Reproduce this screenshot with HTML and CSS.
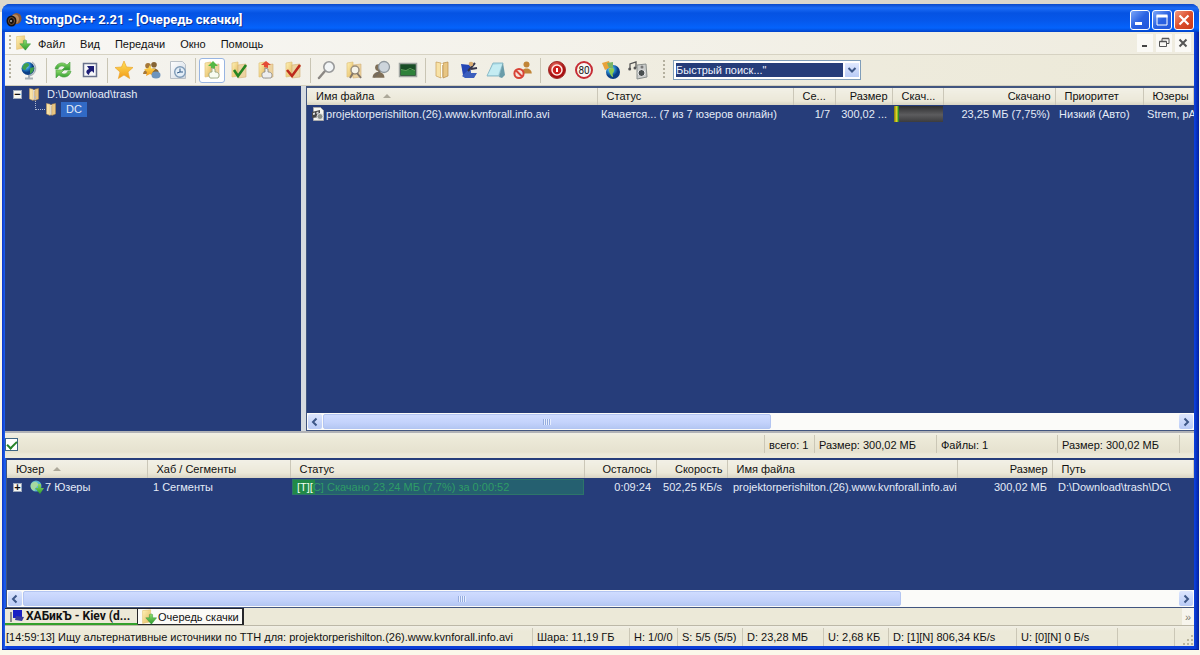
FILE: index.html
```html
<!DOCTYPE html>
<html lang="ru">
<head>
<meta charset="utf-8">
<title>StrongDC++ 2.21 - [Очередь скачки]</title>
<link rel="stylesheet" href="styles.css">
</head>
<body>
<svg class="defs" aria-hidden="true">
  <defs>
    <linearGradient id="gold" x2="1" y2="1"><stop offset="0" stop-color="#fff3b8"/><stop offset="1" stop-color="#e3b75c"/></linearGradient>
    <linearGradient id="amber" x2="0" y2="1"><stop offset="0" stop-color="#ffe45a"/><stop offset="1" stop-color="#f29a18"/></linearGradient>
    <linearGradient id="grass" x2="0" y2="1"><stop offset="0" stop-color="#8fdc6a"/><stop offset="1" stop-color="#2c9a2c"/></linearGradient>
    <linearGradient id="paper" x2="1" y2="1"><stop offset="0" stop-color="#ffffff"/><stop offset="1" stop-color="#cfd8e2"/></linearGradient>
    <radialGradient id="sea" cx=".35" cy=".3"><stop offset="0" stop-color="#9be0ff"/><stop offset=".6" stop-color="#2382c8"/><stop offset="1" stop-color="#0b3f86"/></radialGradient>
    <radialGradient id="ruby" cx=".4" cy=".3"><stop offset="0" stop-color="#f07a6a"/><stop offset="1" stop-color="#a80f10"/></radialGradient>
    <symbol id="folder" viewBox="0 0 20 20"><path d="M3 3l6-1v14l-6 1z" fill="url(#gold)" stroke="#dfc078" stroke-width=".7"/><path d="M9 5l8-1v13l-8 1z" fill="#ecd3a0" stroke="#d3b074" stroke-width=".6"/></symbol>
    <symbol id="open" viewBox="0 0 20 20"><path d="M4 2l5 1v15l-5-2z" fill="#f8e2a6" stroke="#c79d57" stroke-width=".7"/><path d="M16 2l-5 1v15l5-2z" fill="#e8c684" stroke="#b98c47" stroke-width=".7"/><path d="M9 4h2v13H9z" fill="#fffdf2"/><path d="M10.500 5v12" stroke="#b9935a" stroke-width=".7"/></symbol>
    <symbol id="queue" viewBox="0 0 20 20"><path d="M2 2l10-1v15l-10 2z" fill="url(#gold)" stroke="#e2bd66" stroke-width=".7"/><path d="M10.500 7c2-1 3-1 4 0v4h5l-6.500 8-7-8h4.500z" fill="url(#grass)" stroke="#2d9138" stroke-width=".6"/></symbol>
    <symbol id="person" viewBox="0 0 20 20"><circle cx="10" cy="6" r="4"/><path d="M3 18c0-9 14-9 14 0z"/></symbol>
  </defs>
</svg>
<main class="window">
  <header class="titlebar">
    <svg class="icon16" viewBox="0 0 16 16"><ellipse cx="10.500" cy="6.500" rx="5" ry="5.500" fill="#8c5a36"/><ellipse cx="9" cy="7" rx="4" ry="4.500" fill="#b98a5e"/><ellipse cx="5.500" cy="9" rx="5" ry="5.500" fill="#17120f"/><ellipse cx="5.500" cy="9" rx="3" ry="3.500" fill="none" stroke="#7a5233"/><circle cx="5" cy="9" r="1" fill="#aaa"/></svg>
    <h1 class="title">StrongDC++ 2.21 - [Очередь скачки]</h1>
    <div class="captions">
      <button class="caption" aria-label="Свернуть"><svg viewBox="0 0 18 18"><path d="M4 12.500h7" stroke="#fff" stroke-width="3"/></svg></button>
      <button class="caption" aria-label="Развернуть"><svg viewBox="0 0 18 18"><path d="M4 4.500h10V14H4z" fill="none" stroke="#fff"/><path d="M3.500 5h11" stroke="#fff" stroke-width="3"/></svg></button>
      <button class="caption caption-close" aria-label="Закрыть"><svg viewBox="0 0 18 18"><path d="M4.500 4.500l9 9m0-9l-9 9" stroke="#fff" stroke-width="2.200"/></svg></button>
    </div>
  </header>

  <nav class="menubar">
    <span class="grip"></span>
    <svg class="icon16 menu-icon"><use href="#queue"/></svg>
    <button class="menu">Файл</button><button class="menu">Вид</button><button class="menu">Передачи</button><button class="menu">Окно</button><button class="menu">Помощь</button>
    <div class="mdi">
      <button aria-label="Свернуть окно"><svg viewBox="0 0 14 14"><path d="M4 10h5" stroke="#444" stroke-width="2"/></svg></button>
      <button aria-label="Восстановить окно"><svg viewBox="0 0 14 14"><path d="M5 5V2.500h7v5h-2" fill="none" stroke="#555"/><path d="M5 2.500h7M2.500 5.500h7" stroke="#555" stroke-width="1.500"/><path d="M2.500 5.500h7v5h-7z" fill="none" stroke="#555"/></svg></button>
      <button aria-label="Закрыть окно"><svg viewBox="0 0 14 14"><path d="M3.500 3.500l7 7m0-7l-7 7" stroke="#555" stroke-width="2"/></svg></button>
    </div>
  </nav>

  <div class="toolbar">
    <span class="grip"></span>
    <div class="group">
      <button class="tool" aria-label="Публичные хабы"><svg viewBox="0 0 20 20"><path d="M13 2c6 5 4 12-3 14" fill="none" stroke="#a9b4bb" stroke-width="1.500"/><path d="M10 15v3M6 18.500h8" stroke="#a7afb5" stroke-width="2"/><circle cx="9" cy="8.500" r="6.500" fill="url(#sea)"/><path d="M5 4c3-2 5-1 5 1s-2 1-3 4-4-1-4-1zM11 8l4-1c0 4-2 6-4 7z" fill="#3f9f4c"/></svg></button>
    </div>
    <div class="group">
      <button class="tool" aria-label="Переподключиться"><svg viewBox="0 0 20 20"><path d="M2 9c1-6 8-8 12-4l3-3v8H9l3-3C9 5 6 6 5 9z" fill="url(#grass)" stroke="#5aa852" stroke-width=".7"/><path d="M18 11c-1 6-8 8-12 4l-3 3v-8h8l-3 3c3 2 6 1 7-2z" fill="url(#grass)" stroke="#5aa852" stroke-width=".7"/></svg></button>
      <button class="tool" aria-label="Перейти"><svg viewBox="0 0 20 20"><path d="M3.500 3.500h13v13h-13z" fill="#f7f8fa" stroke="#68718b" stroke-width="1.500"/><path d="M7 6h7v7l-2-2c-2 1-3 2-3 4-4-2-3-5 0-6z" fill="#1d1d75"/></svg></button>
    </div>
    <div class="group">
      <button class="tool" aria-label="Избранные хабы"><svg viewBox="0 0 20 20"><path d="M10 1l2.500 6 6.500.5-5 4.500 1.600 6.500L10 15l-5.600 3.500L6 12 1 7.500 7.500 7z" fill="url(#amber)" stroke="#eba62f" stroke-width=".7"/></svg></button>
      <button class="tool" aria-label="Избранные пользователи"><svg viewBox="0 0 20 20"><use href="#person" width="14" height="15" y="1" fill="#a67839"/><use href="#person" x="6" width="14" height="15" fill="#856434"/><path d="M9 5l1.500 3.500 4 .5-3 3 1 4L9 14l-4 2 1-4-3-3 4-.5z" fill="url(#amber)"/><ellipse cx="15" cy="15" rx="4.500" ry="3.500" fill="#6d94bd"/></svg></button>
      <button class="tool" aria-label="Недавние хабы"><svg viewBox="0 0 20 20"><path d="M2.500 1.500h12l3 3v14h-15z" fill="url(#paper)" stroke="#b9c0c7"/><circle cx="12" cy="12" r="5.300" fill="#e3eef8" stroke="#7f9bb7" stroke-width="1.400"/><path d="M12 8.500V12h3M12 12l-3 1" fill="none" stroke="#355c88"/></svg></button>
    </div>
    <div class="group">
      <button class="tool tool-on" aria-label="Очередь скачки" aria-pressed="true"><svg viewBox="0 0 20 20"><use href="#folder"/><path d="M9 8V6H6l5-5 5 5h-3v3z" fill="#54b846"/><path d="M8 18c-2-4-1-6 2-6V8l3 1v3c4 0 5 3 3 6z" fill="#f8fbf1" stroke="#8b9e77" stroke-width=".8"/></svg></button>
      <button class="tool" aria-label="Скачанные"><svg viewBox="0 0 20 20"><use href="#folder"/><path d="M5 10l4 6 8-11" fill="none" stroke="#258522" stroke-width="2.600"/></svg></button>
      <button class="tool" aria-label="Очередь отдачи"><svg viewBox="0 0 20 20"><use href="#folder"/><path d="M8 7V5H5l5-4 5 4h-3v3z" fill="#e44c36"/><path d="M7 18c-2-4-1-6 2-6V8l3 1v3c4 0 5 3 3 6z" fill="#eee" stroke="#858585" stroke-width=".8"/></svg></button>
      <button class="tool" aria-label="Отданные"><svg viewBox="0 0 20 20"><use href="#folder"/><path d="M4 10l5 6 8-11" fill="none" stroke="#bd2a1c" stroke-width="2.600"/></svg></button>
    </div>
    <div class="group">
      <button class="tool" aria-label="Поиск"><svg viewBox="0 0 20 20"><path d="M8 11l-6 7" stroke="#8b8783" stroke-width="2.400" stroke-linecap="round"/><circle cx="12" cy="7" r="5.200" fill="#f2f5f6" stroke="#98999a" stroke-width="1.600"/></svg></button>
      <button class="tool" aria-label="Поиск ADL"><svg viewBox="0 0 20 20"><use href="#folder"/><circle cx="11" cy="10" r="4" fill="#f5f3e9" stroke="#9a8e7c" stroke-width="1.500"/><path d="M9 13l-3 5M13 13l4 5" stroke="#82766a" stroke-width="2"/></svg></button>
      <button class="tool" aria-label="Поиск-шпион"><svg viewBox="0 0 20 20"><use href="#person" x="-1" width="17" height="20" y="1" fill="#7f6f57"/><circle cx="13" cy="7" r="5.500" fill="#cdd5dc" stroke="#8f989e" stroke-width="1.300"/><path d="M9 11l-6 6" stroke="#756c60" stroke-width="2"/></svg></button>
      <button class="tool" aria-label="Сетевая статистика"><svg viewBox="0 0 20 20"><path d="M1.500 3.500h17v13h-17z" fill="#194d26" stroke="#a0a5a1" stroke-width="1.500"/><path d="M3 10h14v5H3z" fill="#2e813a"/><path d="M3 9.500l5 1 4-2 5 2" fill="none" stroke="#5d9c58"/></svg></button>
    </div>
    <div class="group">
      <button class="tool" aria-label="Открыть список файлов"><svg viewBox="0 0 20 20"><use href="#open"/></svg></button>
      <button class="tool" aria-label="Настройки"><svg viewBox="0 0 20 20"><path d="M2 4l9 1 1 9-8 1z" fill="#2446b5"/><path d="M3 16l7-7 2 4 6 0-3 5H6z" fill="#3b5ebd"/><path d="M9 11l7-8M12 9l6-1" stroke="#34344b" stroke-width="2"/><circle cx="12" cy="4" r="2.300" fill="#d9ad72"/></svg></button>
      <button class="tool" aria-label="Блокнот"><svg viewBox="0 0 20 20"><path d="M7 3h10l-4 13H1z" fill="#a9dce8" stroke="#8dbac6"/><path d="M7 5l-5 10h10l4-11z" fill="#c4ecf2"/><path d="M13 17l4-14 2 12-3 3z" fill="#6a9ca9"/></svg></button>
      <button class="tool" aria-label="Отошел"><svg viewBox="0 0 20 20"><use href="#person" x="6" width="15" height="17" y="-1" fill="#c18538"/><circle cx="6" cy="13.500" r="4.600" fill="#f5e3dc" stroke="#d84336" stroke-width="2"/><path d="M3 10.500l6 6" stroke="#d84336" stroke-width="2"/></svg></button>
    </div>
    <div class="group">
      <button class="tool" aria-label="Выключение"><svg viewBox="0 0 20 20"><circle cx="10" cy="10" r="8.500" fill="url(#ruby)" stroke="#a0302c"/><circle cx="10" cy="10" r="5" fill="#cb201c" stroke="#ffe9e4" stroke-width="1.500"/><path d="M10 8v4" stroke="#fff" stroke-width="2"/></svg></button>
      <button class="tool" aria-label="Ограничение скорости"><svg viewBox="0 0 20 20"><circle cx="10" cy="10" r="8" fill="#f7f7f4" stroke="#c62d35" stroke-width="2"/><text class="limit" x="10" y="13.500">80</text></svg></button>
      <button class="tool" aria-label="Обновление"><svg viewBox="0 0 20 20"><circle cx="12" cy="12" r="7" fill="url(#sea)"/><path d="M8 9c3-2 6-1 5 2s-2 2-1 5-4-1-4-7z" fill="#8fca50"/><path d="M1 3l7-2 2 6-6 3z" fill="#e8a33b"/><path d="M6 3l6-1v6H8z" fill="#7ab366"/></svg></button>
      <button class="tool" aria-label="Звуки"><svg viewBox="0 0 20 20"><path d="M2 9V4l6-2v6" fill="none" stroke="#555" stroke-width="1.300"/><circle cx="1.700" cy="9" r="1.500" fill="#555"/><circle cx="7" cy="8" r="1.500" fill="#555"/><path d="M9 5l9-1 1 13-10 2z" fill="#c9cbca" stroke="#8a8f8c"/><circle cx="13.500" cy="13" r="3.500" fill="#4a5050" stroke="#eee"/><circle cx="14" cy="7" r="1.500" fill="#777"/></svg></button>
    </div>
    <span class="grip grip-end"></span>
    <div class="combo">
      <select aria-label="Быстрый поиск"><option>Быстрый поиск..."</option></select>
      <span class="combo-arrow"><svg viewBox="0 0 14 14"><path d="M3.500 5l3.500 3.500L10.500 5" fill="none" stroke="#3d5788" stroke-width="2"/></svg></span>
    </div>
  </div>

  <div class="panes">
    <ul class="tree">
      <li class="node"><span class="box">−</span><svg class="icon16"><use href="#open"/></svg><span class="node-name">D:\Download\trash</span></li>
      <li class="node child"><span class="branch"></span><svg class="icon16"><use href="#open"/></svg><span class="node-name picked">DC</span></li>
    </ul>
    <section class="list files">
      <div class="rows">
        <table>
          <colgroup><col class="w290"><col class="w196"><col class="w42"><col class="w57"><col class="w51"><col class="w112"><col class="w88"><col></colgroup>
          <thead><tr><th>Имя файла<span class="sort"></span></th><th>Статус</th><th>Се...</th><th class="num">Размер</th><th>Скач...</th><th class="num">Скачано</th><th>Приоритет</th><th>Юзеры</th></tr></thead>
          <tbody><tr>
            <td><span class="with-icon"><svg class="icon14" viewBox="0 0 14 14"><path d="M2.500.5h7l3 3v10h-10z" fill="#f5f5ef" stroke="#aaa"/><path d="M1 5l8-2v7l-8 1z" fill="#474747"/><path d="M2 6l2-.5v2L2 8zM5.500 5l2-.5v2l-2 .5z" fill="#ddd"/><circle cx="9" cy="9.500" r="3" fill="#8c918b" stroke="#e8e8e8"/></svg>projektorperishilton.(26).www.kvnforall.info.avi</span></td>
            <td>Качается... (7 из 7 юзеров онлайн)</td><td class="num">1/7</td><td class="num">300,02 ...</td>
            <td class="meter-cell"><div class="meter"><div class="meter-fill"></div></div></td>
            <td class="num">23,25 МБ (7,75%)</td><td>Низкий (Авто)</td><td class="users">Strem, pA</td></tr></tbody>
        </table>
      </div>
      <div class="scroll">
        <button class="arrow" aria-label="Влево"><svg viewBox="0 0 14 14"><path d="M8.500 3.500L5 7l3.500 3.500" fill="none" stroke="#3d5788" stroke-width="2"/></svg></button>
        <div class="track"><div class="thumb thumb-files"><span class="ridges"></span></div></div>
        <button class="arrow" aria-label="Вправо"><svg viewBox="0 0 14 14"><path d="M5.500 3.500L9 7l-3.500 3.500" fill="none" stroke="#3d5788" stroke-width="2"/></svg></button>
      </div>
    </section>
  </div>

  <div class="totals">
    <div><input type="checkbox" checked aria-label="Показать дерево"></div>
    <div>всего: 1</div><div>Размер: 300,02 МБ</div><div>Файлы: 1</div><div>Размер: 300,02 МБ</div><div></div>
  </div>

  <section class="list transfers">
    <div class="rows">
      <table>
        <colgroup><col class="w140"><col class="w143"><col class="w294"><col class="w72"><col class="w71"><col class="w230"><col class="w95"><col></colgroup>
        <thead><tr><th>Юзер<span class="sort"></span></th><th>Хаб / Сегменты</th><th>Статус</th><th class="num">Осталось</th><th class="num">Скорость</th><th>Имя файла</th><th class="num">Размер</th><th>Путь</th></tr></thead>
        <tbody><tr>
          <td><span class="with-icon"><span class="box">+</span><svg class="icon14 user-icon" viewBox="0 0 14 14"><circle cx="6" cy="6" r="5.500" fill="#5bb7d0"/><path d="M1 4c3-4 8-2 7 1S4 7 5 11C1 10 0 7 1 4z" fill="#a5d9a0"/><path d="M8 4h3v4h3l-4 6-5-6h3z" fill="url(#grass)"/></svg>7 Юзеры</span></td>
          <td>1 Сегменты</td>
          <td class="status-cell"><div class="progress"><div class="progress-text"><span class="lit">[T][</span>C] Скачано 23,24 МБ (7,7%) за 0:00:52</div></div></td>
          <td class="num">0:09:24</td><td class="num">502,25 КБ/s</td><td>projektorperishilton.(26).www.kvnforall.info.avi</td><td class="num">300,02 МБ</td><td>D:\Download\trash\DC\</td></tr></tbody>
      </table>
    </div>
    <div class="scroll">
      <button class="arrow" aria-label="Влево"><svg viewBox="0 0 14 14"><path d="M8.500 3.500L5 7l3.500 3.500" fill="none" stroke="#3d5788" stroke-width="2"/></svg></button>
      <div class="track"><div class="thumb thumb-transfers"><span class="ridges"></span></div></div>
      <button class="arrow" aria-label="Вправо"><svg viewBox="0 0 14 14"><path d="M5.500 3.500L9 7l-3.500 3.500" fill="none" stroke="#3d5788" stroke-width="2"/></svg></button>
    </div>
  </section>

  <div class="tabs">
    <button class="tab tab-hub"><svg class="icon16" viewBox="0 0 16 16"><path d="M1 4h2v10H1z" fill="#8b8a8a"/><path d="M4 2h9v8H4z" fill="#1a20c4"/><path d="M7 8l8 1-2 4-7-1z" fill="#3a3c9c"/></svg>ХАБикЪ - Kiev (d...</button>
    <button class="tab tab-on"><svg class="icon16"><use href="#queue"/></svg>Очередь скачки</button>
    <button class="more" aria-label="Ещё">»</button>
  </div>

  <footer class="status">
    <div>[14:59:13] Ищу альтернативные источники по TTH для: projektorperishilton.(26).www.kvnforall.info.avi</div>
    <div>Шара: 11,19 ГБ</div><div>H: 1/0/0</div><div>S: 5/5 (5/5)</div><div>D: 23,28 МБ</div><div>U: 2,68 КБ</div><div>D: [1][N] 806,34 КБ/s</div><div>U: [0][N] 0 Б/s</div><div></div>
    <div class="corner"><svg viewBox="0 0 12 12"><path d="M9 1h2v2H9zM5 5h2v2H5zM9 5h2v2H9zM1 9h2v2H1zM5 9h2v2H5zM9 9h2v2H9z" fill="#bab69f"/></svg></div>
  </footer>
</main>
</body>
</html>
```
FILE: styles.css
```css
* { box-sizing: border-box; }

body {
  margin: 0;
  height: 100vh;
  padding: 4px 1px 5px 2px;
  background: linear-gradient(#dcd8cc 0, #dcd8cc 12px, #fbf8ea 12px);
  font: 11px/16px "Liberation Sans", Arial, sans-serif;
  color: #111;
}

button, select { font: inherit; color: inherit; margin: 0; padding: 0; border: 0; background: none; }
svg { display: block; flex: none; }
.defs { position: absolute; width: 0; height: 0; }
.icon16 { width: 16px; height: 16px; }
.icon14 { width: 14px; height: 14px; }

.window {
  display: flex;
  flex-direction: column;
  height: 100%;
  min-width: 0;
  padding: 0 5px 3px 3px;
  border-radius: 8px 8px 0 0;
  background: linear-gradient(90deg, #0a35c8, #1f62ee 3px, #0b3fd8 5px, #0b3fd8 calc(100% - 4px), #04209b);
  border-bottom: 1px solid #04209b;
  overflow: hidden;
}

.titlebar {
  flex: none;
  display: flex;
  align-items: center;
  gap: 3px;
  height: 28px;
  margin: 0 -5px 0 -3px;
  padding: 3px 5px 0 4px;
  background: linear-gradient(#0a49c8, #1c6cf5 4px, #0553e3 9px, #0657ea 16px, #0463fc 24px, #0142c9);
}
.title { flex: 1; margin: 0; font-family: Roboto, sans-serif; font-size: 13px; font-weight: bold; color: #fff; text-shadow: 1px 1px #0a2f93; white-space: nowrap; }
.captions { display: flex; gap: 2px; }
.caption {
  width: 20px;
  height: 20px;
  border: 1px solid #fff;
  border-radius: 3px;
  background: linear-gradient(135deg, #7aa5f8, #2a62e2 50%, #2156dc);
}
.caption svg { width: 18px; height: 18px; }
.caption-close { background: linear-gradient(135deg, #f09a80, #dc4e2c 50%, #c93b19); }

.menubar {
  flex: none;
  display: flex;
  align-items: center;
  height: 23px;
  padding-left: 4px;
  background: linear-gradient(90deg, #f8f7f4, #efecdf);
  border-bottom: 1px solid #d6d2c2;
}
.grip { width: 2px; height: 16px; background: repeating-linear-gradient(#b4b09f 0, #b4b09f 2px, transparent 2px, transparent 4px); }
.menu-icon { margin: 0 1px 0 4px; }
.menu { padding: 2px 6px 0; margin-right: 3px; }
.mdi { display: flex; gap: 3px; margin-left: auto; padding-right: 3px; }
.mdi button { width: 16px; height: 18px; padding: 1px; background: #faf9f5; }
.mdi svg { width: 14px; height: 14px; }

.toolbar {
  flex: none;
  display: flex;
  align-items: center;
  height: 31px;
  padding-left: 4px;
  background: linear-gradient(90deg, #f5f4f0, #efecdf 60%, #ece9d8);
  border-bottom: 1px solid #d3cfbe;
}
.toolbar .grip { height: 20px; margin-right: 5px; }
.group { display: flex; gap: 1px; }
.group + .group { margin-left: 4px; padding-left: 3px; border-left: 1px solid #c9c5b4; }
.tool { display: grid; place-items: center; width: 26px; height: 25px; border-radius: 3px; }
.tool svg { width: 20px; height: 20px; }
.tool-on { background: #fff; border: 1px solid #98b5e2; }
.limit { font: 10px Roboto, sans-serif; text-anchor: middle; fill: #222; }
.toolbar .grip-end { margin: 0 8px 0 12px; }
.combo { display: flex; gap: 2px; width: 188px; height: 20px; padding: 2px 1px 2px 2px; border: 1px solid #7f9db9; background: #fff; }
.combo select { appearance: none; flex: 1; min-width: 0; height: 14px; line-height: 14px; background: #263d7a; color: #eef2ff; border-radius: 0; }
.combo-arrow { width: 14px; background: linear-gradient(#dfe8fe, #b9cbf6); }
.combo-arrow svg { width: 14px; height: 14px; }

.panes { flex: 1; min-height: 0; display: flex; gap: 5px; background: #d6dbe0; border-bottom: 2px solid #b1b2b6; }
.tree { flex: none; width: 24.9%; margin: 0; padding: 1px 0 0 8px; list-style: none; background: #263d7a; color: #e4ebf7; }
.node { display: flex; align-items: center; height: 15px; }
.node-name { padding: 0 5px; line-height: 15px; }
.node .icon16 { margin-left: 4px; height: 15px; }
.node-name.picked { margin-left: 2px; background: #316ac5; }
.child { padding-left: 22px; }
.branch { width: 10px; height: 14px; margin: -14px -6px 0 0; border-left: 1px dotted #aeb7ce; border-bottom: 1px dotted #aeb7ce; }
.box { width: 9px; height: 9px; border: 1px solid #9ba7bc; background: #f6f6f0; color: #111; font-size: 11px; font-weight: bold; line-height: 7px; text-align: center; }

.list { display: flex; flex-direction: column; min-width: 0; background: #263d7a; color: #e4ebf7; border: 1px solid #41557f; border-width: 2px 0 1px 1px; }
.files { flex: 1; }
.files th { height: 17px; }
.files td { padding-left: 4px; }
.transfers { flex: none; height: 150px; margin-left: 1px; border-top: 2px solid #263d7a; }
.rows { flex: 1; min-height: 0; overflow: hidden; }
table { width: 100%; table-layout: fixed; border-collapse: collapse; }
th, td { height: 18px; padding: 0 5px; overflow: hidden; white-space: nowrap; text-align: left; font-weight: normal; line-height: 17px; }
th { padding: 0 4px 0 9px; background: linear-gradient(#f2f0e6, #ebe8d8 13px, #d8d4c3); color: #111; border-right: 1px solid #cbc7b8; }
th.num { padding-left: 4px; }
.num { text-align: right; }
.files .users { padding-right: 0; }
.sort { display: inline-block; margin: 0 0 2px 9px; border: 4px solid transparent; border-top-width: 0; border-bottom: 4px solid #aca899; }
.with-icon { display: flex; align-items: center; gap: 1px; }
.w290 { width: 290px; } .w196 { width: 196px; } .w42 { width: 42px; } .w57 { width: 57px; } .w51 { width: 51px; }
.w112 { width: 112px; } .w88 { width: 88px; } .w140 { width: 140px; } .w143 { width: 143px; } .w294 { width: 294px; }
.w72 { width: 72px; } .w71 { width: 71px; } .w230 { width: 230px; } .w95 { width: 95px; }
.files .meter-cell { padding: 0 0 0 2px; }
.meter { height: 16px; background: linear-gradient(#2f2f31, #5c5c5e 55%, #3c3c3e); }
.meter-fill { width: 10%; height: 100%; background: linear-gradient(90deg, #7f7a10, #f3e22a 60%, #2e8f26 80%); }
.transfers td { padding-left: 6px; }
.user-icon { margin: 0 0 0 7px; }
.transfers .status-cell { padding: 0 0 0 2px; }
.progress { height: 16px; background: linear-gradient(90deg, #218a48 7.7%, #256070 7.7%); border: 1px solid #2d7569; }
.progress-text { padding-left: 4px; line-height: 15px; color: #2f9c66; }
.lit { color: #f3fff3; }

.scroll { flex: none; display: flex; height: 17px; padding: 1px; background: #fbfbf9; }
.arrow { width: 14px; height: 15px; border-radius: 2px; background: linear-gradient(#dde6fe, #b9cbf6); }
.arrow svg { width: 14px; height: 14px; }
.track { flex: 1; padding: 0 1px; }
.thumb { display: grid; place-items: center; height: 15px; border: 1px solid #b3c5f2; border-radius: 2px; background: linear-gradient(#cfdcff, #c3d2fb 60%, #b5c8f3); }
.thumb-files { width: 52.4%; }
.thumb-transfers { width: 76%; }
.ridges { width: 8px; height: 6px; background: repeating-linear-gradient(90deg, #96addf 0, #96addf 1px, #e6eeff 1px, #e6eeff 2px); }

.totals { flex: none; display: grid; grid-template-columns: 1fr 50px 122px 121px 122px 15px; align-items: center; height: 25px; padding-bottom: 3px; background: linear-gradient(#f1efe4, #ece9d8 6px, #e6e2cf 19px, #ece9d8 21px); }
.totals div { height: 18px; padding-left: 4px; line-height: 20px; border-left: 1px solid #cbc7b6; white-space: nowrap; }
.totals div:first-child { padding: 3px 0 0; border: 0; }
.totals input { appearance: none; display: grid; place-items: center; width: 13px; height: 13px; margin: 0; border: 1px solid #3e6583; background: #fff; }
.totals input::before { content: ""; width: 8px; height: 4px; margin-top: -2px; border: solid #268327; border-width: 0 0 2px 2px; transform: rotate(-45deg); }

.tabs { flex: none; display: flex; height: 18px; background: #ece9d8; border-bottom: 1px solid #bcb8a8; }
.tab { display: flex; align-items: center; gap: 1px; border: 1px solid #26262a; border-width: 1px 2px 1px 0; line-height: 14px; white-space: nowrap; }
.tab-hub { width: 133px; padding-left: 4px; font-family: Roboto, sans-serif; font-size: 12px; font-weight: bold; border-right-width: 1px; border-bottom: 2px solid #33a02c; }
.tab-on { padding: 0 3px; background: #fbfaf6; }
.more { width: 12px; margin-left: auto; background: #f7f5ed; color: #7e7b70; }

.status { flex: none; display: grid; grid-template-columns: 1fr 97px 48px 65px 81px 65px 128px 101px 57px 20px; height: 20px; background: linear-gradient(#f1efe5, #ece9d8 5px); }
.status div { margin: 2px 0 0; padding-left: 4px; border-left: 1px solid #cbc7b6; white-space: nowrap; overflow: hidden; line-height: 18px; }
.status div:first-child { padding-left: 1px; border: 0; }
.status .corner { display: flex; justify-content: flex-end; align-items: flex-end; }
.corner svg { width: 12px; height: 12px; }
```
